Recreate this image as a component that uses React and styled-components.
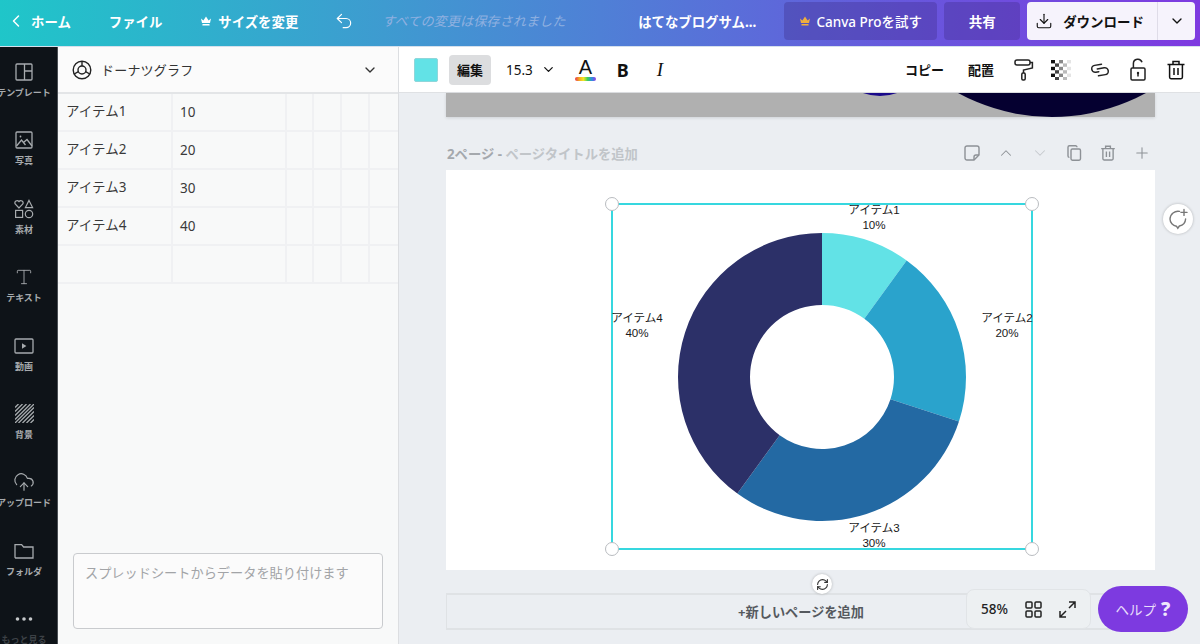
import React from 'react';
import styled, { createGlobalStyle } from 'styled-components';
import { ChevronLeft, ChevronDown, ChevronUp, Undo2, Download, Plus, Type, CloudUpload, RefreshCw } from 'lucide-react';

const font = `"Noto Sans", "Noto Sans CJK JP", sans-serif`;

const GlobalStyle = createGlobalStyle`
  html, body { margin: 0; padding: 0; height: 100%; overflow: hidden; }
  body { font-family: ${font}; color: #222; }
  * { box-sizing: border-box; }
`;

const Page = styled.div`
  width: 1200px;
  height: 644px;
  display: flex;
  flex-direction: column;
  overflow: hidden;
`;

/* top bar */
const TopBar = styled.header`
  height: 47px;
  flex: none;
  display: flex;
  align-items: flex-start;
  padding: 2px 5px 0 6px;
  background: linear-gradient(92deg, #1fc6c9 0%, #3e9bd0 32%, #4f80d6 50%, #6758dd 75%, #7e3ae0 100%);
  color: #fff;
  border-bottom: 1px solid #d5e0ec;
`;

const BarLink = styled.div`
  height: 38px;
  display: flex;
  align-items: center;
  gap: ${p => p.$gap || 0}px;
  margin-left: ${p => p.$left || 0}px;
  font-size: 13.4px;
  font-weight: 700;
  white-space: nowrap;
`;

const SavedText = styled.div`
  height: 38px;
  width: 200px;
  margin-left: 28px;
  line-height: 38px;
  font-size: 13.2px;
  font-style: italic;
  color: #8fb0e0;
  white-space: nowrap;
`;

const BarButton = styled.div`
  height: 38px;
  width: ${p => p.$width}px;
  margin-left: ${p => p.$left}px;
  display: flex;
  align-items: center;
  justify-content: center;
  gap: 5px;
  border-radius: 4px;
  background: rgba(60, 40, 130, 0.32);
  font-size: 13.5px;
  font-weight: ${p => p.$bold ? 700 : 500};
  white-space: nowrap;
`;

const DownloadButton = styled.div`
  height: 38px;
  width: 168px;
  margin-left: 7px;
  display: flex;
  border-radius: 4px;
  background: #f6f3fc;
  color: #111;
  font-size: 13.5px;
  font-weight: 700;
`;

const DownloadMain = styled.div`
  width: 131px;
  display: flex;
  align-items: center;
  gap: 10px;
  padding-left: 8px;
  border-right: 1px solid #dfdce8;
  white-space: nowrap;
`;

const DownloadCaret = styled.div`
  flex: 1;
  display: flex;
  align-items: center;
  justify-content: center;
`;

/* body */
const Body = styled.div`
  flex: 1;
  min-height: 0;
  display: flex;
`;

const Sidebar = styled.nav`
  width: 58px;
  flex: none;
  padding: 13px 9px 0 0;
  background: #0e1318;
  border-right: 1px solid #4a4f54;
  overflow: hidden;
`;

const SideItem = styled.div`
  height: 68.4px;
  display: flex;
  flex-direction: column;
  align-items: center;
  color: #a7abae;
`;

const SideIcon = styled.div`
  height: 24px;
  display: flex;
  align-items: center;
  justify-content: center;
`;

const SideLabel = styled.div`
  margin-top: 1px;
  font-size: 9px;
  line-height: 16px;
  font-weight: 700;
  white-space: nowrap;
  color: ${p => p.$dim ? '#3c4146' : '#a7abae'};
`;

const Panel = styled.aside`
  width: 341px;
  flex: none;
  display: flex;
  flex-direction: column;
  background: #f8f9f9;
  border-right: 1px solid #dcdee1;
`;

const PanelHeader = styled.div`
  height: 47px;
  flex: none;
  display: flex;
  align-items: center;
  gap: 9px;
  padding: 0 20px 0 14px;
  background: #fbfbfb;
  border-bottom: 2px solid #e3e5e7;
  font-size: 13px;
  color: #333;
`;

const PanelTitle = styled.span`
  flex: 1;
  letter-spacing: 0.2px;
`;

const DataTable = styled.div`
  display: grid;
  grid-template-columns: 115px 114px 27px 28px 28px 28px;
  grid-auto-rows: 38px;
`;

const Cell = styled.div`
  padding: ${p => p.$second ? '8px 0 0 7px' : '7px 0 0 8px'};
  border-right: 2px solid #f0f1f3;
  border-bottom: 2px solid #f0f1f3;
  font-size: 13.5px;
  line-height: 20px;
  color: #3a3a3a;
  white-space: nowrap;
  &:nth-child(6n) { border-right: none; }
`;

const PasteBox = styled.div`
  width: 310px;
  height: 76px;
  margin: auto 0 15px 15px;
  padding: 9px 11px;
  border: 1px solid #c9cbce;
  border-radius: 4px;
  background: #fbfbfb;
  font-size: 13.2px;
  color: #a2a4a7;
  white-space: nowrap;
`;

const Main = styled.main`
  position: relative;
  flex: 1;
  min-width: 0;
  display: flex;
  flex-direction: column;
  background: #ebeef2;
`;

const Toolbar = styled.div`
  height: 46px;
  flex: none;
  display: flex;
  align-items: center;
  padding: 0 12px 0 15px;
  background: #fff;
  border-bottom: 1px solid #dfe1e4;
  color: #111;
`;

const Swatch = styled.div`
  width: 24px;
  height: 24px;
  border-radius: 2px;
  border: 1px solid #8fd6da;
  background: #62e2e6;
`;

const EditButton = styled.div`
  width: 42px;
  height: 30px;
  margin-left: 11px;
  display: flex;
  align-items: center;
  justify-content: center;
  border-radius: 4px;
  background: #dcdddf;
  font-size: 13px;
  font-weight: 700;
`;

const SizeValue = styled.div`
  margin-left: 15px;
  display: flex;
  align-items: center;
  gap: 8px;
  font-size: 13.5px;
`;

const ColorA = styled.div`
  width: 21px;
  margin-left: 19px;
  text-align: center;
  font-size: 20px;
  line-height: 18px;
  font-family: "Liberation Sans", sans-serif;
  &::after {
    content: '';
    display: block;
    height: 4px;
    margin-top: 1px;
    border-radius: 2px;
    background: linear-gradient(90deg, #e8384f, #f5a623, #f5e623, #3ecf5a, #2e8de6, #9b3fe0);
  }
`;

const StyleLetter = styled.div`
  width: 16px;
  margin-left: ${p => p.$left}px;
  text-align: center;
  font-family: ${p => p.$italic ? `"Liberation Serif", serif` : font};
  font-size: ${p => p.$italic ? 19 : 18}px;
  font-weight: ${p => p.$italic ? 400 : 700};
  font-style: ${p => p.$italic ? 'italic' : 'normal'};
`;

const ToolSpacer = styled.div`
  flex: 1;
`;

const ToolText = styled.div`
  margin-right: ${p => p.$right}px;
  font-size: 13px;
  font-weight: 700;
  white-space: nowrap;
`;

const ToolIcon = styled.div`
  width: 24px;
  height: 24px;
  margin-left: ${p => p.$left || 0}px;
  display: flex;
  align-items: center;
  justify-content: center;
`;

const Workspace = styled.div`
  flex: 1;
  min-height: 0;
  padding: 0 45px 0 47px;
  display: flex;
  flex-direction: column;
`;

const PrevPage = styled.div`
  height: 24px;
  flex: none;
  background: #b0b0b0;
  box-shadow: 0 1px 3px rgba(0, 0, 0, 0.12);
`;

const PrevArt = styled.svg`
  display: block;
`;

const PageTitleRow = styled.div`
  height: 53px;
  flex: none;
  display: flex;
  align-items: center;
  justify-content: space-between;
  padding: 19px 4px 0 1px;
  font-size: 13.3px;
  font-weight: 700;
  color: #a4a8ad;
`;

const TitleHint = styled.span`
  color: #c1c5c9;
`;

const PageActions = styled.div`
  display: flex;
  gap: 16px;
`;

const PageAction = styled.div`
  width: 18px;
  height: 18px;
  display: flex;
  align-items: center;
  justify-content: center;
  color: ${p => p.$muted ? '#c5c9cd' : '#8d9196'};
`;

const Canvas = styled.div`
  position: relative;
  height: 400px;
  flex: none;
  background: #fff;
`;

const Selection = styled.div`
  position: absolute;
  left: 165px;
  top: 33px;
  width: 422px;
  height: 347px;
  display: flex;
  align-items: center;
  justify-content: center;
  border: 2px solid #36d7df;
`;

const Handle = styled.div`
  position: absolute;
  width: 14px;
  height: 14px;
  border-radius: 50%;
  background: #fff;
  border: 1px solid #b9bcc0;
  ${p => p.$top ? 'top: -8px;' : 'bottom: -8px;'}
  ${p => p.$left ? 'left: -8px;' : 'right: -8px;'}
`;

const ChartLabel = styled.div`
  position: absolute;
  left: ${p => p.$x}px;
  top: ${p => p.$y}px;
  width: 70px;
  margin-left: -35px;
  text-align: center;
  font-family: "Liberation Sans", "Noto Sans CJK JP", sans-serif;
  font-size: 11.6px;
  line-height: 15px;
  color: #1a1a1a;
`;

const AddPage = styled.div`
  height: 37px;
  margin-top: 23px;
  flex: none;
  display: flex;
  align-items: center;
  justify-content: center;
  border-top: 2px solid #dfe2e5;
  border-bottom: 2px solid #dfe2e5;
  border-left: 1px solid #dfe2e5;
  font-size: 13.2px;
  font-weight: 700;
  color: #55595e;
`;

const RoundButton = styled.div`
  position: absolute;
  display: flex;
  align-items: center;
  justify-content: center;
  border-radius: 50%;
  background: #fff;
  box-shadow: 0 0 3px rgba(0, 0, 0, 0.25);
  color: #333;
  left: ${p => p.$x}px;
  top: ${p => p.$y}px;
  width: ${p => p.$size}px;
  height: ${p => p.$size}px;
`;

const ZoomBox = styled.div`
  position: absolute;
  left: 567px;
  top: 542px;
  width: 125px;
  height: 40px;
  display: flex;
  align-items: center;
  gap: 17px;
  padding-left: 14px;
  border: 1px solid #e1e4e7;
  border-radius: 8px;
  background: #edf0f2;
  font-size: 13.5px;
  font-weight: 500;
  color: #222;
`;

const HelpButton = styled.div`
  position: absolute;
  left: 699px;
  top: 539px;
  width: 90px;
  height: 46px;
  display: flex;
  align-items: center;
  justify-content: center;
  gap: 5px;
  border-radius: 23px;
  background: #7d3ae0;
  color: #e8dcfb;
  font-size: 13.5px;
`;

const HelpMark = styled.span`
  color: #efe7fc;
  font-size: 19px;
  font-weight: 800;
  line-height: 1;
`;

/* hand drawn icons */
const Crown = ({ size = 12, color = '#fff' }) => (
  <svg width={size} height={size} viewBox="0 0 12 12" fill={color}>
    <path d="M1 3.4 3.4 5.6 6 1.6 8.6 5.6 11 3.4 10 8H2Z" />
    <rect x="2.4" y="9" width="7.2" height="1.6" rx=".4" />
  </svg>
);

const DonutMark = () => (
  <svg width="20" height="20" viewBox="0 0 20 20" fill="none" stroke="#222" strokeWidth="1.4">
    <circle cx="10" cy="10" r="8.8" />
    <circle cx="10" cy="10" r="4" />
    <path d="M10 1.2V6M13.6 11.6 17.8 14M6.4 11.6 2.2 14" />
  </svg>
);

const TemplateIcon = () => (
  <svg width="18" height="18" viewBox="0 0 18 18" fill="none" stroke="currentColor" strokeWidth="1.3">
    <rect x="1" y="1" width="16" height="16" rx="1" />
    <path d="M9.5 1v16M9.5 8H17" />
  </svg>
);

const PhotoIcon = () => (
  <svg width="18" height="18" viewBox="0 0 18 18" fill="none" stroke="currentColor" strokeWidth="1.3">
    <rect x="1" y="1" width="16" height="16" rx="1" />
    <circle cx="5.5" cy="5.5" r=".9" fill="currentColor" stroke="none" />
    <path d="M1.5 15 6.5 9l4 5M8.5 11.5 12 8.5l5 6.5" />
  </svg>
);

const ElementsIcon = () => (
  <svg width="20" height="20" viewBox="0 0 20 20" fill="none" stroke="currentColor" strokeWidth="1.2">
    <path d="M5 9 1.4 5.2a2.2 2.2 0 0 1 3.6-2.6 2.2 2.2 0 0 1 3.6 2.6Z" />
    <path d="M15 1.4 18.6 8.6h-7.2Z" />
    <rect x="1.6" y="11.4" width="7" height="7" />
    <circle cx="15" cy="15" r="3.7" />
  </svg>
);

const VideoIcon = () => (
  <svg width="20" height="16" viewBox="0 0 20 16" fill="none" stroke="currentColor" strokeWidth="1.3">
    <rect x="1" y="1" width="18" height="14" rx="1" />
    <path d="M8 5.2 12.4 8 8 10.8Z" fill="currentColor" stroke="none" />
  </svg>
);

const BackgroundIcon = () => (
  <svg width="19" height="19" viewBox="0 0 19 19" stroke="currentColor" strokeWidth="1.3">
    <path d="M0 3.5 3.5 0M0 7.5 7.5 0M0 11.5 11.5 0M0 15.5 15.5 0M0 19 19 0M3.5 19 19 3.5M7.5 19 19 7.5M11.5 19 19 11.5M15.5 19 19 15.5" />
  </svg>
);

const FolderIcon = () => (
  <svg width="20" height="16" viewBox="0 0 20 16" fill="none" stroke="currentColor" strokeWidth="1.3">
    <path d="M1 14.2V1.6h6.6L9.6 4H19v11H1.6Z" />
  </svg>
);

const RollerIcon = () => (
  <svg width="20" height="22" viewBox="0 0 20 22" fill="none" stroke="#222" strokeWidth="1.5">
    <rect x="1" y="1" width="15" height="5" rx="2" />
    <path d="M16 3.5h2.4V9L9.5 11v3" />
    <rect x="7.8" y="14" width="3.4" height="7" rx="1.2" />
  </svg>
);

const Checker = () => (
  <svg width="20" height="20" viewBox="0 0 20 20">
    {[0, 1, 2, 3, 4, 5].flatMap(row => [0, 1, 2, 3, 4].map(col => (
      (row + col) % 2 === 0 && (
        <rect key={`${row}-${col}`} x={col * 4} y={row * 3.4} width="4" height="3.4" fill={['#111', '#444', '#888', '#bbb', '#e4e4e4'][col]} />
      )
    )))}
  </svg>
);

const LinkIcon = () => (
  <svg width="20" height="16" viewBox="0 0 20 16" fill="none" stroke="#222" strokeWidth="1.5" strokeLinecap="round">
    <g transform="rotate(-10 10 8)">
      <path d="M12.5 2.5H5.5a3.5 3.5 0 0 0 0 7h3" />
      <path d="M7.5 6.5h7a3.5 3.5 0 0 1 0 7h-7" />
    </g>
  </svg>
);

const LockIcon = () => (
  <svg width="16" height="24" viewBox="0 0 16 24" fill="none" stroke="#222" strokeWidth="1.5">
    <rect x="1" y="10" width="14" height="12" rx="1.2" />
    <path d="M3.4 10V5.6a4.4 4.4 0 0 1 8.6-1.3" />
    <circle cx="8" cy="15" r="1.2" fill="#222" stroke="none" />
    <path d="M8 15v3.6" />
  </svg>
);

const TrashIcon = ({ size = 20, width = 1.5 }) => (
  <svg width={size} height={size} viewBox="0 0 20 20" fill="none" stroke="currentColor" strokeWidth={width}>
    <path d="M1.5 4.5h17M7 4.5V1.5h6v3M3.6 4.5v12.8a1.4 1.4 0 0 0 1.4 1.4h10a1.4 1.4 0 0 0 1.4-1.4V4.5" />
    <path d="M8 8v7M12 8v7" />
  </svg>
);

const NoteIcon = () => (
  <svg width="16" height="16" viewBox="0 0 16 16" fill="none" stroke="currentColor" strokeWidth="1.4">
    <path d="M10 15H3a2 2 0 0 1-2-2V3a2 2 0 0 1 2-2h10a2 2 0 0 1 2 2v7Z" />
    <path d="M10 15v-3a2 2 0 0 1 2-2h3" />
  </svg>
);

const CopyIcon = () => (
  <svg width="16" height="16" viewBox="0 0 16 16" fill="none" stroke="currentColor" strokeWidth="1.4">
    <rect x="5" y="4" width="9.5" height="11.2" rx="1.4" />
    <path d="M3.4 12.4A1.4 1.4 0 0 1 2 11V2.2A1.4 1.4 0 0 1 3.4.8h6.2a1.4 1.4 0 0 1 1.4 1.4" />
  </svg>
);

const CommentIcon = () => (
  <svg width="22" height="22" viewBox="0 0 22 22" fill="none" stroke="#777" strokeWidth="1.4" strokeLinecap="round">
    <path d="M12.6 3.4A8 8 0 0 0 3 11a7.4 7.4 0 0 0 6.4 7.2l1.4 2 1.6-2.2A7.6 7.6 0 0 0 18.6 11" />
    <path d="M17 1.4v6M14 4.4h6" />
  </svg>
);

const GridIcon = () => (
  <svg width="17" height="17" viewBox="0 0 17 17" fill="none" stroke="#222" strokeWidth="1.5">
    <rect x="1" y="1" width="6" height="6" rx="1" />
    <rect x="10" y="1" width="6" height="6" rx="1" />
    <rect x="1" y="10" width="6" height="6" rx="1" />
    <rect x="10" y="10" width="6" height="6" rx="1" />
  </svg>
);

const ExpandIcon = () => (
  <svg width="17" height="17" viewBox="0 0 17 17" fill="none" stroke="#222" strokeWidth="1.5">
    <path d="M10 1h6v6M16 1l-6 6M7 16H1v-6M1 16l6-6" />
  </svg>
);

const sideItems = [
  { label: 'テンプレート', icon: <TemplateIcon /> },
  { label: '写真', icon: <PhotoIcon /> },
  { label: '素材', icon: <ElementsIcon /> },
  { label: 'テキスト', icon: <Type size={20} strokeWidth={1.1} /> },
  { label: '動画', icon: <VideoIcon /> },
  { label: '背景', icon: <BackgroundIcon /> },
  { label: 'アップロード', icon: <CloudUpload size={22} strokeWidth={1.3} /> },
  { label: 'フォルダ', icon: <FolderIcon /> },
];

const rows = [
  ['アイテム1', '10'],
  ['アイテム2', '20'],
  ['アイテム3', '30'],
  ['アイテム4', '40'],
  ['', ''],
];

const slices = [
  { value: 10, color: '#62e2e6' },
  { value: 20, color: '#2aa3cc' },
  { value: 30, color: '#2369a3' },
  { value: 40, color: '#2c3068' },
];

const labels = [
  { name: 'アイテム1', pct: '10%', x: 261, y: -3 },
  { name: 'アイテム2', pct: '20%', x: 394, y: 105 },
  { name: 'アイテム3', pct: '30%', x: 261, y: 315 },
  { name: 'アイテム4', pct: '40%', x: 24, y: 105 },
];

const polar = (r, pct) => {
  const a = (pct / 100) * 2 * Math.PI;
  return [150 + r * Math.sin(a), 150 - r * Math.cos(a)];
};

const slicePath = (from, to) => {
  const big = to - from > 50 ? 1 : 0;
  const [x1, y1] = polar(144, from);
  const [x2, y2] = polar(144, to);
  const [x3, y3] = polar(72, to);
  const [x4, y4] = polar(72, from);
  return `M${x1} ${y1}A144 144 0 ${big} 1 ${x2} ${y2}L${x3} ${y3}A72 72 0 ${big} 0 ${x4} ${y4}Z`;
};

const Donut = () => {
  let total = 0;
  return (
    <svg width="300" height="300" viewBox="0 0 300 300">
      {slices.map(s => {
        const d = slicePath(total, total + s.value);
        total += s.value;
        return <path key={s.color} d={d} fill={s.color} />;
      })}
    </svg>
  );
};

export default function App() {
  return (
    <Page>
      <GlobalStyle />
      <TopBar>
        <BarLink $gap={5}><ChevronLeft size={20} strokeWidth={1.8} />ホーム</BarLink>
        <BarLink $left={38}>ファイル</BarLink>
        <BarLink $left={38} $gap={6}><Crown />サイズを変更</BarLink>
        <BarLink $left={36}><Undo2 size={20} strokeWidth={1.4} /></BarLink>
        <SavedText>すべての変更は保存されました</SavedText>
        <BarLink $left={56}>はてなブログサム...</BarLink>
        <BarButton $width={153} $left={28}><Crown color="#f0ae3c" />Canva Proを試す</BarButton>
        <BarButton $width={76} $left={7} $bold>共有</BarButton>
        <DownloadButton>
          <DownloadMain><Download size={18} strokeWidth={1.5} />ダウンロード</DownloadMain>
          <DownloadCaret><ChevronDown size={16} /></DownloadCaret>
        </DownloadButton>
      </TopBar>
      <Body>
        <Sidebar>
          {sideItems.map(item => (
            <SideItem key={item.label}>
              <SideIcon>{item.icon}</SideIcon>
              <SideLabel>{item.label}</SideLabel>
            </SideItem>
          ))}
          <SideItem>
            <SideIcon><svg width="18" height="6" viewBox="0 0 18 6" fill="#c5c8ca"><circle cx="2.5" cy="3" r="1.8" /><circle cx="9" cy="3" r="1.8" /><circle cx="15.5" cy="3" r="1.8" /></svg></SideIcon>
            <SideLabel $dim>もっと見る</SideLabel>
          </SideItem>
        </Sidebar>
        <Panel>
          <PanelHeader>
            <DonutMark />
            <PanelTitle>ドーナツグラフ</PanelTitle>
            <ChevronDown size={16} />
          </PanelHeader>
          <DataTable>
            {rows.flatMap((row, i) => [
              <Cell key={`${i}a`}>{row[0]}</Cell>,
              <Cell key={`${i}b`} $second>{row[1]}</Cell>,
              <Cell key={`${i}c`} />,
              <Cell key={`${i}d`} />,
              <Cell key={`${i}e`} />,
              <Cell key={`${i}f`} />,
            ])}
          </DataTable>
          <PasteBox>スプレッドシートからデータを貼り付けます</PasteBox>
        </Panel>
        <Main>
          <Toolbar>
            <Swatch />
            <EditButton>編集</EditButton>
            <SizeValue>15.3<ChevronDown size={15} /></SizeValue>
            <ColorA>A</ColorA>
            <StyleLetter $left={19}>B</StyleLetter>
            <StyleLetter $left={21} $italic>I</StyleLetter>
            <ToolSpacer />
            <ToolText $right={24}>コピー</ToolText>
            <ToolText $right={18}>配置</ToolText>
            <ToolIcon><RollerIcon /></ToolIcon>
            <ToolIcon $left={13}><Checker /></ToolIcon>
            <ToolIcon $left={15}><LinkIcon /></ToolIcon>
            <ToolIcon $left={14}><LockIcon /></ToolIcon>
            <ToolIcon $left={14}><TrashIcon /></ToolIcon>
          </Toolbar>
          <Workspace>
            <PrevPage>
              <PrevArt width="709" height="24" viewBox="0 0 709 24">
                <circle cx="434" cy="-47" r="50" fill="#1a0a8a" />
                <circle cx="606" cy="-172" r="196" fill="#050030" />
              </PrevArt>
            </PrevPage>
            <PageTitleRow>
              <span>2ページ - <TitleHint>ページタイトルを追加</TitleHint></span>
              <PageActions>
                <PageAction><NoteIcon /></PageAction>
                <PageAction><ChevronUp size={20} strokeWidth={1.4} /></PageAction>
                <PageAction $muted><ChevronDown size={20} strokeWidth={1.4} /></PageAction>
                <PageAction><CopyIcon /></PageAction>
                <PageAction><TrashIcon size={16} width={1.7} /></PageAction>
                <PageAction><Plus size={18} strokeWidth={1.4} /></PageAction>
              </PageActions>
            </PageTitleRow>
            <Canvas>
              <Selection>
                <Donut />
                {labels.map(l => (
                  <ChartLabel key={l.name} $x={l.x} $y={l.y}>{l.name}<br />{l.pct}</ChartLabel>
                ))}
                <Handle $top $left />
                <Handle $top />
                <Handle $left />
                <Handle />
              </Selection>
            </Canvas>
            <AddPage>+新しいページを追加</AddPage>
          </Workspace>
          <RoundButton $x={413} $y={527} $size={20}><RefreshCw size={13} /></RoundButton>
          <RoundButton $x={764} $y={157} $size={30}><CommentIcon /></RoundButton>
          <ZoomBox>
            58%
            <GridIcon />
            <ExpandIcon />
          </ZoomBox>
          <HelpButton>ヘルプ<HelpMark>?</HelpMark></HelpButton>
        </Main>
      </Body>
    </Page>
  );
}
